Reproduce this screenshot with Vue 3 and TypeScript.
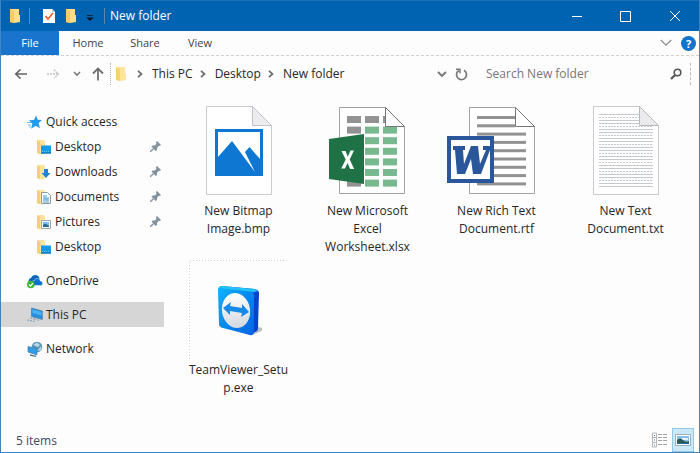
<script setup lang="ts">
import { ref } from 'vue'

interface Place {
  label: string
  icon: string
  pinned?: boolean
  child?: boolean
  group?: boolean
}

interface FileItem {
  kind: string
  lines: string[]
}

const tabs: string[] = ['Home', 'Share', 'View']
const crumbs: string[] = ['This PC', 'Desktop', 'New folder']

const places: Place[] = [
  { label: 'Quick access', icon: 'star' },
  { label: 'Desktop', icon: 'desktop', pinned: true, child: true },
  { label: 'Downloads', icon: 'downloads', pinned: true, child: true },
  { label: 'Documents', icon: 'documents', pinned: true, child: true },
  { label: 'Pictures', icon: 'pictures', pinned: true, child: true },
  { label: 'Desktop', icon: 'desktop', child: true },
  { label: 'OneDrive', icon: 'onedrive', group: true },
  { label: 'This PC', icon: 'pc', group: true },
  { label: 'Network', icon: 'network', group: true },
]

const files: FileItem[] = [
  { kind: 'bmp', lines: ['New Bitmap', 'Image.bmp'] },
  { kind: 'xlsx', lines: ['New Microsoft', 'Excel', 'Worksheet.xlsx'] },
  { kind: 'rtf', lines: ['New Rich Text', 'Document.rtf'] },
  { kind: 'txt', lines: ['New Text', 'Document.txt'] },
  { kind: 'exe', lines: ['TeamViewer_Setu', 'p.exe'] },
]

const current = ref('This PC')
const query = ref('')
const sheetRows = [0, 1, 2, 3, 4, 5, 6]
const docRows = [0, 1, 2, 3, 4, 5, 6, 7, 8]
const textRows = Array.from({ length: 25 }, (_, i) => i)
</script>

<template>
  <div class="window">
    <header class="titlebar">
      <svg class="tb-folder" width="12" height="16" viewBox="0 0 12 16">
        <path d="M1 1h9v6h1v7l-6 1-4-1z" fill="#ffdf88" />
        <path d="M1 1l4 2v12l-4-1z" fill="#f5cd62" />
      </svg>
      <span class="tb-sep"></span>
      <button class="plain tb-check" aria-label="Properties">
        <svg width="14" height="16" viewBox="0 0 14 16">
          <path d="M1 1h9l3 3v11H1z" fill="#fff" />
          <path d="M10 1v3h3z" fill="#c6d3df" />
          <path d="M3.500 8l2.500 3 5-6" fill="none" stroke="#e85d2a" stroke-width="1.600" />
        </svg>
      </button>
      <button class="plain tb-new" aria-label="New folder">
        <svg width="12" height="16" viewBox="0 0 12 16">
          <path d="M1 1h9v6h1v7l-6 1-4-1z" fill="#ffdf88" />
          <path d="M1 1l4 2v12l-4-1z" fill="#f5cd62" />
        </svg>
      </button>
      <button class="plain tb-more" aria-label="Customize Quick Access Toolbar">
        <svg width="8" height="6" viewBox="0 0 8 6">
          <path d="M1 .5h6" stroke="#062a4c" />
          <path d="M0 2.500h8l-4 3.500z" fill="#04182b" />
        </svg>
      </button>
      <span class="tb-sep"></span>
      <h1 class="title">New folder</h1>
      <div class="controls">
        <button class="plain" aria-label="Minimize">
          <svg width="12" height="12" viewBox="0 0 12 12"><path d="M1 6.500h10" stroke="#fff" /></svg>
        </button>
        <button class="plain" aria-label="Maximize">
          <svg width="12" height="12" viewBox="0 0 12 12"><path d="M.5 1.500h10v10H.5z" fill="none" stroke="#fff" /></svg>
        </button>
        <button class="plain" aria-label="Close">
          <svg width="12" height="12" viewBox="0 0 12 12"><path d="M1 1l10 10M11 1L1 11" stroke="#fff" /></svg>
        </button>
      </div>
    </header>

    <nav class="ribbon" aria-label="Ribbon">
      <button class="plain tab-file">File</button>
      <button v-for="tab in tabs" :key="tab" class="plain tab">{{ tab }}</button>
      <button class="plain expand" aria-label="Expand the ribbon">
        <svg width="12" height="8" viewBox="0 0 12 8"><path d="M.8 1L6 6.200 11.200 1" fill="none" stroke="#8d8d8d" stroke-width="1.200" /></svg>
      </button>
      <button class="help" aria-label="Help">?</button>
    </nav>

    <div class="address">
      <button class="plain back" aria-label="Back">
        <svg width="14" height="12" viewBox="0 0 14 12"><path d="M13 6H2M6.500 1.500L1.800 6l4.700 4.500" fill="none" stroke="#636363" stroke-width="1.700" /></svg>
      </button>
      <button class="plain forward" aria-label="Forward">
        <svg width="13" height="12" viewBox="0 0 13 12"><path d="M0 6h11M7 1.500L11.500 6 7 10.500" fill="none" stroke="#c4c4c4" stroke-width="1.400" stroke-dasharray="2 1" /></svg>
      </button>
      <button class="plain recent" aria-label="Recent locations">
        <svg width="8" height="6" viewBox="0 0 8 6"><path d="M1 1l3 3 3-3" fill="none" stroke="#777" stroke-width="1.600" /></svg>
      </button>
      <button class="plain up" aria-label="Up">
        <svg width="12" height="14" viewBox="0 0 12 14"><path d="M6 13.500V2M1 6.500l5-5 5 5" fill="none" stroke="#707070" stroke-width="1.800" /></svg>
      </button>
      <div class="path">
        <svg class="path-folder" width="12" height="16" viewBox="0 0 12 16">
          <path d="M1 1h9v6h1v7l-6 1-4-1z" fill="#ffe49b" />
          <path d="M1 1l4 2v12l-4-1z" fill="#f6d271" />
        </svg>
        <template v-for="crumb in crumbs" :key="crumb">
          <svg class="chevron" width="6" height="8" viewBox="0 0 6 8"><path d="M1 .8L4.500 4 1 7.200" fill="none" stroke="#6b6b6b" stroke-width="1.700" /></svg>
          <button class="plain crumb">{{ crumb }}</button>
        </template>
        <button class="plain previous" aria-label="Previous locations">
          <svg width="10" height="7" viewBox="0 0 10 7"><path d="M1 1l4 4 4-4" fill="none" stroke="#777" stroke-width="1.900" /></svg>
        </button>
        <button class="plain refresh" aria-label="Refresh">
          <svg width="13" height="13" viewBox="0 0 13 13">
            <path d="M9 2.300A5 5 0 1 1 3.700 2.500" fill="none" stroke="#767676" stroke-width="1.700" />
            <path d="M1 1.300h4v4" fill="none" stroke="#767676" stroke-width="1.500" />
          </svg>
        </button>
      </div>
      <label class="search">
        <input v-model="query" type="text" placeholder="Search New folder" aria-label="Search New folder" />
        <svg width="12" height="12" viewBox="0 0 12 12">
          <circle cx="7.500" cy="4.500" r="3.300" fill="none" stroke="#555" stroke-width="1.600" />
          <path d="M5 7L1 11" stroke="#555" stroke-width="2.200" />
        </svg>
      </label>
    </div>

    <div class="body">
      <nav class="sidebar" aria-label="Places">
        <a
          v-for="(place, i) in places"
          :key="i"
          href="#"
          class="place"
          :class="{ child: place.child, group: place.group, selected: place.label === current }"
          @click.prevent="current = place.label"
        >
          <svg class="place-icon" width="16" height="16" viewBox="0 0 16 16">
            <template v-if="place.icon === 'star'">
              <path d="M9 1.500l1.700 4.200 4.300.2-3.400 3.200 1.300 5.200-4.200-2.600L4.200 14.800l1.100-5.100L2 6.300l5-.4z" fill="#1f9bec" />
              <path d="M0 8.500h4M1 11h3M2 13h2" stroke="#74c0f2" />
            </template>
            <template v-else-if="place.icon === 'onedrive'">
              <path d="M3 10.500a3 3 0 0 1 1-5.500 4.500 4.500 0 0 1 8-1l1 4-8 3z" fill="#0865b8" />
              <path d="M5 12.500c-2-2 0-5 2-4.500 1-3.500 6-3 6.300 0 3.200.2 3.200 4.500.2 4.500z" fill="#0a72cf" stroke="#fff" stroke-width=".5" />
              <circle cx="3.800" cy="11.500" r="3.800" fill="#39b632" />
              <path d="M2 11.500l1.500 1.600 2.500-3" fill="none" stroke="#fff" stroke-width="1.300" />
            </template>
            <template v-else-if="place.icon === 'pc'">
              <path d="M4.500 1l10.800 3v8.500L4.500 9.500z" fill="#2590df" stroke="#527c9b" stroke-width=".7" />
              <path d="M5.500 2.500l9 2.500v3.500L5.500 6z" fill="#4bb1f0" />
              <path d="M3 11l5 1M0 13l8 1.500M7 12l6 1.500" stroke="#8fa2b1" stroke-width="1.200" stroke-dasharray="2 1" />
            </template>
            <template v-else-if="place.icon === 'network'">
              <circle cx="10" cy="6" r="5.300" fill="#5b93b8" />
              <path d="M6 4l4-2.500L13 4l-2 2zM10 10l4-5 .5 4z" fill="#b8d7e7" />
              <path d="M1 5.500l9 2v6.500L1 11z" fill="#2c9ee8" stroke="#507c98" stroke-width=".7" />
              <path d="M3 14l6 1.300" stroke="#527a95" stroke-width="1.300" />
            </template>
            <template v-else>
              <path d="M1 1h7l1 2v12l-4 .5L1 14z" fill="#ffe29b" />
              <path d="M1 1l3 2v12l-3-1z" fill="#f5cf77" />
              <template v-if="place.icon === 'desktop'">
                <path d="M5 6.500h10v8H5z" fill="#159be9" />
                <path d="M5 14h10" stroke="#0968ad" />
                <path d="M6 12.500h8" stroke="#65c6f5" stroke-dasharray="1 1" />
              </template>
              <path v-else-if="place.icon === 'downloads'" d="M8 5h4v4h2.500L10 14 5.500 9H8z" fill="#2583d4" />
              <template v-else-if="place.icon === 'documents'">
                <path d="M5.500 3.500h6l3 3v8h-9z" fill="#f8fbfd" stroke="#8c9aa6" />
                <path d="M7 7h4M7 9h6M7 11h6M7 13h6" stroke="#559bc9" />
                <path d="M8 8l4 2v2L8 10z" fill="#77b9df" />
              </template>
              <template v-else>
                <path d="M5.500 6.500h9v8h-9z" fill="#f4fbff" stroke="#9aa7b0" />
                <path d="M7 8h6v3H7z" fill="#7cc6ef" />
                <path d="M7 11l2-1.500 4 2V13H7z" fill="#2c6c92" />
              </template>
            </template>
          </svg>
          <span class="place-name">{{ place.label }}</span>
          <svg v-if="place.pinned" class="pin" width="11" height="11" viewBox="0 0 11 11">
            <path d="M7 0l4 4-1 .8L8.500 5 7 7v2L5.800 10 1.500 5.500 2.700 4.500l2 .1L6.500 3 6 1z" fill="#82919d" />
            <path d="M3.700 7.500L0 11" stroke="#82919d" stroke-width="1.300" />
          </svg>
        </a>
      </nav>

      <main class="files">
        <button v-for="file in files" :key="file.kind" class="plain file">
          <svg class="thumb" width="100" height="100" viewBox="0 0 100 100">
            <template v-if="file.kind === 'bmp'">
              <path d="M17.500 5.500h46l19 19v69h-65z" fill="#fff" stroke="#c9cdd0" />
              <path d="M63.500 5.500v19h19z" fill="#ececee" stroke="#bfc3c6" />
              <path d="M26 28h48v47H26z" fill="#0d77d2" />
              <path d="M29 31h42v27L60.500 46 56 51l10 20L43 40 29 56z" fill="#fff" />
            </template>
            <template v-else-if="file.kind === 'xlsx'">
              <path d="M21.500 6.500h46l19 19v67h-65z" fill="#fff" stroke="#a2a2a2" />
              <g v-for="r in sheetRows" :key="r">
                <rect x="29" :y="15 + r * 10.600" width="14" height="7" fill="#929292" />
                <rect x="47" :y="15 + r * 10.600" width="14" height="7" :fill="r ? '#79b990' : '#929292'" />
                <rect x="65" :y="15 + r * 10.600" :width="r ? 14 : 3" height="7" :fill="r ? '#79b990' : '#929292'" />
              </g>
              <path d="M67.500 6.500v19h19z" fill="#fff" stroke="#777" />
              <path d="M11 38l35-5v50l-35-5z" fill="#1f7246" />
              <path d="M23.500 50h4l2.300 5.700L32.500 49.500h3.500L31.700 58.500 36.200 68h-4l-2.600-6-2.700 5.500h-3.700L27.700 58.500z" fill="#fff" />
            </template>
            <template v-else-if="file.kind === 'rtf'">
              <path d="M22.500 6.500h46l19 19v67h-65z" fill="#fff" stroke="#a2a2a2" />
              <rect v-for="r in docRows" :key="r" x="30" :y="15 + r * 8.300" :width="r < 2 ? 38 : 49" height="3" fill="#929292" />
              <path d="M68.500 6.500v19h19z" fill="#fff" stroke="#777" />
              <path d="M2 37h43v43H2z" fill="#fff" stroke="#2a579a" stroke-width="4" />
              <path d="M6 45h12v4h-2l1 14 7-18h7l2 18 6-14h-3v-4h9v4h-2L34 73h-8l-2-15-6 15h-8L8 49H6z" fill="#2a579a" />
            </template>
            <template v-else-if="file.kind === 'txt'">
              <path d="M17.500 5.500h46l19 19v69h-65z" fill="#fff" stroke="#c9cbcc" />
              <path
                v-for="r in textRows"
                :key="r"
                :d="`M23 ${13.500 + r * 3}h${r < 4 ? 40 : 54}`"
                stroke="#c6cacd"
                :stroke-dasharray="r % 3 === 1 ? '2 1' : 'none'"
              />
              <path d="M63.500 5.500v19h19z" fill="#eaeaec" stroke="#b7b9bb" />
            </template>
            <template v-else>
              <defs>
                <linearGradient id="tv-face" x1="0" y1="0" x2="1" y2="1">
                  <stop offset="0" stop-color="#12b4f8" />
                  <stop offset=".5" stop-color="#0788f0" />
                  <stop offset="1" stop-color="#0562e4" />
                </linearGradient>
                <linearGradient id="tv-disc" x1="0" y1="0" x2="0" y2="1">
                  <stop offset="0" stop-color="#fff" />
                  <stop offset="1" stop-color="#d4d9df" />
                </linearGradient>
              </defs>
              <path d="M.5 99V.5h97" fill="none" stroke="#d0d0d0" stroke-dasharray="1 2" />
              <path d="M66 66l7 2q1 3-3 4l-7 3z" fill="#b9bec3" />
              <path d="M32 26l34 3q4 1 4 4l-1 35q0 3-3 4l-4 3-31-9z" fill="#0643cf" />
              <path d="M29 30q0-4 4-4l29 5q3 1 3 4v36q0 5-4 4l-27-7q-4-1-4-4z" fill="url(#tv-face)" />
              <path d="M30 28l3-2 33 3 3 2-4 1z" fill="#23c3f8" />
              <ellipse cx="47" cy="50.500" rx="14" ry="17.500" transform="rotate(-10 47 50.500)" fill="url(#tv-disc)" />
              <path d="M34 48l8-6-1 4 12 2v-4l7 8-8 5 1-4-12-2v4z" fill="#1688e6" />
            </template>
          </svg>
          <span class="label">
            <span v-for="line in file.lines" :key="line" class="line">{{ line }}</span>
          </span>
        </button>
      </main>
    </div>

    <footer class="status">
      <span class="count">{{ files.length }} items</span>
      <button class="plain view" aria-label="Details view">
        <svg width="16" height="16" viewBox="0 0 16 16">
          <path d="M.5 1v14h4V1zM.5 5.500h4M.5 10.500h4" fill="none" stroke="#b5b5b5" />
          <path d="M2 3.500h1M2 8h1M2 13h1" stroke="#456d8d" />
          <path d="M6 2.500h4M11 2.500h4M6 5.500h4M11 5.500h4M6 8.500h4M11 8.500h4M6 12.500h4M11 12.500h4" stroke="#a2a2a2" />
        </svg>
      </button>
      <button class="plain view active" aria-label="Large icons view">
        <svg width="16" height="12" viewBox="0 0 16 12">
          <path d="M.5.5h15v11H.5z" fill="#fff" stroke="#9dafbb" />
          <path d="M2 2h12v8H2z" fill="#83bfe9" />
          <path d="M2 6q3-3 6 0t6 1v3H2z" fill="#2c5955" />
          <path d="M6 4h7v2H8z" fill="#e7f4fb" />
          <path d="M2 9.500h12" stroke="#25679f" />
        </svg>
      </button>
    </footer>
  </div>
</template>

<style>
body {
  background: #fdfdfe;
}
</style>

<style scoped>
* {
  box-sizing: border-box;
}

.window {
  display: flex;
  flex-direction: column;
  min-height: 100vh;
  border: 1px solid #3f84c0;
  border-top-color: #1c6fb5;
  background: #fdfdfe;
  color: #262626;
  font-family: "Open Sans", "Noto Sans", sans-serif;
  font-size: 12px;
  line-height: 18px;
}

.plain {
  display: flex;
  align-items: center;
  justify-content: center;
  padding: 0;
  border: 0;
  background: none;
  color: inherit;
  font: inherit;
}

svg {
  flex: none;
}

.titlebar {
  display: flex;
  align-items: center;
  height: 30px;
  padding-left: 8px;
  background: #0063b1;
  color: #fff;
}

.tb-sep {
  width: 1px;
  height: 16px;
  background: #6086ad;
}

.tb-folder {
  margin-right: 8px;
}

.tb-check {
  margin-left: 12px;
}

.tb-new {
  margin-left: 9px;
}

.tb-more {
  margin: 4px 10px 0 9px;
}

.title {
  margin: 0 0 0 5px;
  font-size: 12px;
  font-weight: 400;
}

.controls {
  display: flex;
  align-self: stretch;
  margin-left: auto;
}

.controls .plain {
  width: 49px;
}

.ribbon {
  display: flex;
  align-items: center;
  height: 25px;
  border-bottom: 1px dashed #cfcfcf;
  font-size: 11px;
  color: #444;
}

.tab-file {
  width: 58px;
  height: 24px;
  background: #1874cd;
  color: #fff;
}

.tab {
  width: 58px;
}

.tab:nth-child(3) {
  width: 56px;
}

.tab:nth-child(4) {
  width: 54px;
}

.expand {
  margin-left: auto;
}

.help {
  width: 15px;
  height: 15px;
  margin: 0 3px 0 9px;
  padding: 0;
  border: 0;
  border-radius: 50%;
  background: #1273cf;
  color: #fff;
  font: 700 11px/15px "Open Sans", sans-serif;
}

.address {
  display: flex;
  align-items: center;
  height: 36px;
  padding: 0 8px 0 13px;
}

.forward {
  margin-left: 19px;
}

.recent {
  margin-left: 13px;
}

.up {
  margin: 0 6px 0 11px;
}

.path {
  display: flex;
  flex: 1;
  align-items: center;
  height: 22px;
  padding-left: 4px;
  border-left: 1px dotted #bbb;
}

.path-folder {
  margin-right: 3px;
}

.chevron {
  margin: 0 9px 0 7px;
}

.previous {
  margin-left: auto;
}

.refresh {
  margin: 0 10px 0 8px;
}

.search {
  display: flex;
  align-items: center;
  width: 213px;
  height: 22px;
  padding: 0 8px;
  border-right: 1px dashed #bbb;
}

.search input {
  flex: 1;
  min-width: 0;
  padding: 0;
  border: 0;
  outline: 0;
  background: none;
  color: #262626;
  font: inherit;
}

.search input::placeholder {
  color: #767676;
  opacity: 1;
}

.body {
  display: flex;
  flex: 1;
}

.sidebar {
  width: 163px;
  padding-top: 17px;
}

.place {
  display: flex;
  align-items: center;
  height: 25px;
  padding: 0 3px 0 26px;
  color: inherit;
  text-decoration: none;
}

.child {
  padding-left: 35px;
}

.group {
  margin-top: 9px;
}

.selected {
  background: #d6d6d6;
}

.place-name {
  flex: 1;
  margin-left: 3px;
}

.files {
  display: grid;
  flex: 1;
  grid-template-columns: repeat(auto-fill, 129px);
  align-content: start;
  row-gap: 4px;
  padding: 9px 0 0 10px;
}

.file {
  flex-direction: column;
  justify-content: flex-start;
}

.label {
  display: flex;
  flex-direction: column;
  align-items: center;
  margin-top: 1px;
}

.line {
  white-space: nowrap;
}

.status {
  display: flex;
  align-items: center;
  height: 24px;
  padding: 0 5px 0 15px;
  color: #3c4a63;
}

.count {
  flex: 1;
  padding-top: 2px;
}

.view {
  width: 24px;
  height: 24px;
}

.view.active {
  width: 22px;
  border: 1px solid #92c8e8;
  background: #cbe8f6;
}
</style>
